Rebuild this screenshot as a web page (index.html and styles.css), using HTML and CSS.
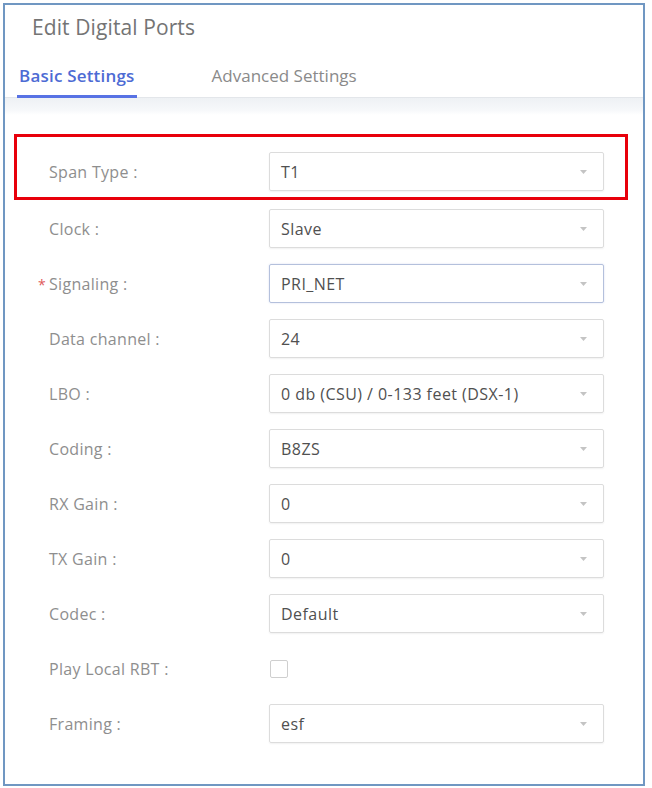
FILE: index.html
```html
<!DOCTYPE html>
<html>
<head>
<meta charset="utf-8">
<link rel="stylesheet" href="styles.css">
</head>
<body>
<div class="frame">
  <div class="title">Edit Digital Ports</div>
  <div class="tabs">
    <div class="tab active">Basic Settings</div>
    <div class="tab">Advanced Settings</div>
  </div>
  <div class="band"></div>
  <div class="form">
    <div class="highlight">
      <div class="row">
        <div class="label">Span Type :</div>
        <div class="select"><span>T1</span><svg class="caret" width="7" height="4" viewBox="0 0 7 4"><path d="M0 0 L7 0 L3.5 4 Z" fill="#c4c4c4"/></svg></div>
      </div>
    </div>
    <div class="row first">
      <div class="label">Clock :</div>
      <div class="select"><span>Slave</span><svg class="caret" width="7" height="4" viewBox="0 0 7 4"><path d="M0 0 L7 0 L3.5 4 Z" fill="#c4c4c4"/></svg></div>
    </div>
    <div class="row">
      <div class="label"><span class="req">*</span>Signaling :</div>
      <div class="select focus"><span>PRI_NET</span><svg class="caret" width="7" height="4" viewBox="0 0 7 4"><path d="M0 0 L7 0 L3.5 4 Z" fill="#c4c4c4"/></svg></div>
    </div>
    <div class="row">
      <div class="label">Data channel :</div>
      <div class="select"><span>24</span><svg class="caret" width="7" height="4" viewBox="0 0 7 4"><path d="M0 0 L7 0 L3.5 4 Z" fill="#c4c4c4"/></svg></div>
    </div>
    <div class="row">
      <div class="label">LBO :</div>
      <div class="select"><span>0 db (CSU) / 0-133 feet (DSX-1)</span><svg class="caret" width="7" height="4" viewBox="0 0 7 4"><path d="M0 0 L7 0 L3.5 4 Z" fill="#c4c4c4"/></svg></div>
    </div>
    <div class="row">
      <div class="label">Coding :</div>
      <div class="select"><span>B8ZS</span><svg class="caret" width="7" height="4" viewBox="0 0 7 4"><path d="M0 0 L7 0 L3.5 4 Z" fill="#c4c4c4"/></svg></div>
    </div>
    <div class="row">
      <div class="label">RX Gain :</div>
      <div class="select"><span>0</span><svg class="caret" width="7" height="4" viewBox="0 0 7 4"><path d="M0 0 L7 0 L3.5 4 Z" fill="#c4c4c4"/></svg></div>
    </div>
    <div class="row">
      <div class="label">TX Gain :</div>
      <div class="select"><span>0</span><svg class="caret" width="7" height="4" viewBox="0 0 7 4"><path d="M0 0 L7 0 L3.5 4 Z" fill="#c4c4c4"/></svg></div>
    </div>
    <div class="row">
      <div class="label">Codec :</div>
      <div class="select"><span>Default</span><svg class="caret" width="7" height="4" viewBox="0 0 7 4"><path d="M0 0 L7 0 L3.5 4 Z" fill="#c4c4c4"/></svg></div>
    </div>
    <div class="row">
      <div class="label">Play Local RBT :</div>
      <div class="checkbox"></div>
    </div>
    <div class="row">
      <div class="label">Framing :</div>
      <div class="select"><span>esf</span><svg class="caret" width="7" height="4" viewBox="0 0 7 4"><path d="M0 0 L7 0 L3.5 4 Z" fill="#c4c4c4"/></svg></div>
    </div>
  </div>
</div>
</body>
</html>
```
FILE: styles.css
```css
html, body {
  margin: 0;
  padding: 0;
  background: #ffffff;
}
body {
  font-family: "Open Sans", "Liberation Sans", sans-serif;
}
.frame {
  box-sizing: border-box;
  margin: 3px 0 0 3px;
  width: 642px;
  height: 783px;
  border: 2px solid #7097c2;
  background: #ffffff;
}
.title {
  padding: 8px 0 0 27px;
  font-size: 21px;
  line-height: 28px;
  letter-spacing: 0.1px;
  color: #747474;
}
.tabs {
  display: flex;
  margin-top: 24px;
  border-bottom: 1px solid #e3e6ea;
}
.tab {
  font-size: 17px;
  line-height: 22px;
  color: #8a8a8a;
  padding: 0 0 8px;
  margin-bottom: -1px;
  border-bottom: 3px solid transparent;
}
.tab.active {
  margin-left: 12px;
  padding: 0 2px 8px;
  color: #4d6bd4;
  font-weight: 600;
  letter-spacing: 0.2px;
  border-bottom-color: #5872e4;
}
.tab + .tab {
  margin-left: 75px;
}
.band {
  height: 17px;
  background: linear-gradient(#eef1f4, #f6f8fa 70%, #ffffff);
}
.form {
  padding-top: 19px;
}
.highlight {
  margin-left: 9px;
  width: 614px;
  box-sizing: border-box;
  border: 3px solid #e8000b;
  padding: 15px 0 6px 32px;
}
.row {
  display: flex;
  align-items: center;
  height: 39px;
  margin-top: 16px;
  margin-left: 44px;
}
.highlight .row {
  margin: 0;
}
.row.first {
  margin-top: 9px;
}
.label {
  width: 220px;
  font-size: 16px;
  letter-spacing: 0.3px;
  color: #8e8e8e;
}
.req {
  display: inline-block;
  width: 11px;
  margin-left: -11px;
  color: #e05a5a;
  font-size: 14px;
}
.select {
  box-sizing: border-box;
  width: 335px;
  height: 39px;
  display: flex;
  align-items: center;
  justify-content: space-between;
  padding: 0 16px 0 11px;
  border: 1px solid #dcdcdc;
  border-radius: 2px;
  box-shadow: 0 1px 2px rgba(0, 0, 0, 0.06);
  font-size: 16px;
  letter-spacing: 0.45px;
  color: #505050;
}
.select.focus {
  border-color: #b4c0dc;
  box-shadow: 0 0 2px rgba(90, 120, 200, 0.25);
}
.caret {
  display: block;
}
.checkbox {
  box-sizing: border-box;
  width: 18px;
  height: 18px;
  margin-left: 1px;
  border: 1px solid #cfcfcf;
  border-radius: 2px;
}
```
